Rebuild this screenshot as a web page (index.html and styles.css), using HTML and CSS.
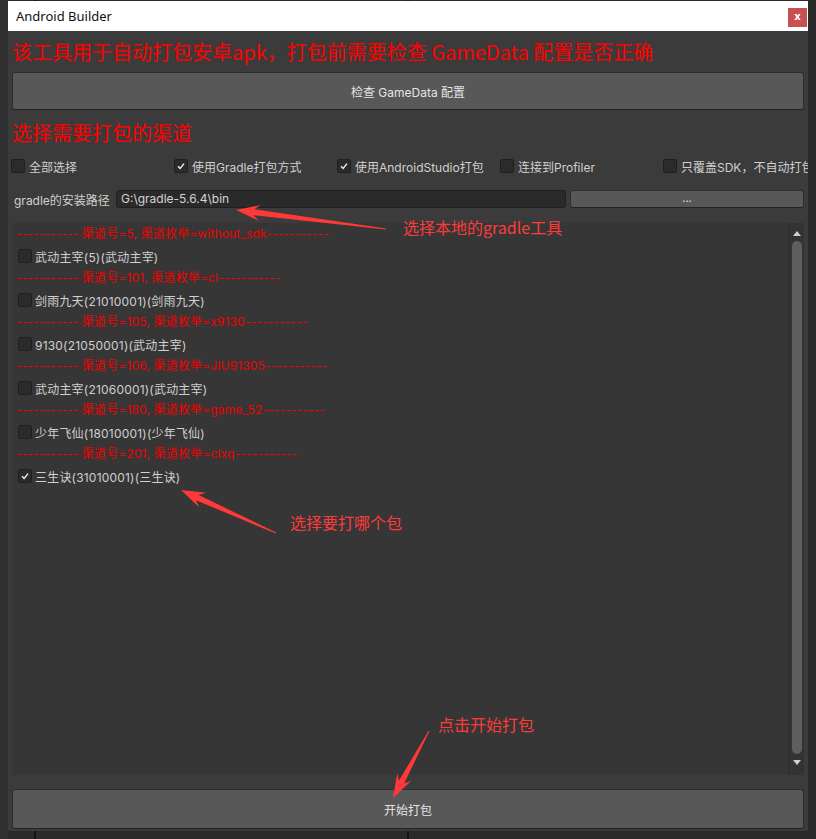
FILE: index.html
```html
<!DOCTYPE html>
<html lang="zh">
<head>
<meta charset="utf-8">
<title>Android Builder</title>
<link rel="stylesheet" href="styles.css">
</head>
<body>
<div class="window">
  <div class="titlebar">
    <span class="title">Android Builder</span>
    <span class="close">x</span>
  </div>
  <div class="content">
    <div class="heading">该工具用于自动打包安卓apk，打包前需要检查 GameData 配置是否正确</div>
    <div class="btn btn-check">检查 GameData 配置</div>
    <div class="heading heading2">选择需要打包的渠道</div>
    <div class="options">
      <label class="opt"><span class="cb"></span>全部选择</label>
      <label class="opt"><span class="cb on"><svg viewBox="0 0 14 14"><polyline points="3.5,7.2 6,9.8 10.5,4.2"/></svg></span>使用Gradle打包方式</label>
      <label class="opt"><span class="cb on"><svg viewBox="0 0 14 14"><polyline points="3.5,7.2 6,9.8 10.5,4.2"/></svg></span>使用AndroidStudio打包</label>
      <label class="opt"><span class="cb"></span>连接到Profiler</label>
      <label class="opt"><span class="cb"></span>只覆盖SDK，不自动打包</label>
    </div>
    <div class="gradle">
      <span class="glabel">gradle的安装路径</span>
      <span class="field">G:\gradle-5.6.4\bin</span>
      <span class="btn btn-small">...</span>
    </div>
    <div class="list">
      <div class="rows">
        <div class="sep">----------- 渠道号=5, 渠道枚举=without_sdk-----------</div>
        <div class="item"><span class="cb"></span>武动主宰(5)(武动主宰)</div>
        <div class="sep">----------- 渠道号=101, 渠道枚举=cl-----------</div>
        <div class="item"><span class="cb"></span>剑雨九天(21010001)(剑雨九天)</div>
        <div class="sep">----------- 渠道号=105, 渠道枚举=x9130-----------</div>
        <div class="item"><span class="cb"></span>9130(21050001)(武动主宰)</div>
        <div class="sep">----------- 渠道号=106, 渠道枚举=JIU91305-----------</div>
        <div class="item"><span class="cb"></span>武动主宰(21060001)(武动主宰)</div>
        <div class="sep">----------- 渠道号=180, 渠道枚举=game_52-----------</div>
        <div class="item"><span class="cb"></span>少年飞仙(18010001)(少年飞仙)</div>
        <div class="sep">----------- 渠道号=201, 渠道枚举=clxq-----------</div>
        <div class="item"><span class="cb on"><svg viewBox="0 0 14 14"><polyline points="3.5,7.2 6,9.8 10.5,4.2"/></svg></span>三生诀(31010001)(三生诀)</div>
      </div>
      <div class="scrollbar">
        <span class="arrow up"></span>
        <span class="thumb"></span>
        <span class="arrow down"></span>
      </div>
    </div>
    <div class="btn btn-build">开始打包</div>
  </div>
</div>

<div class="overlay">
  <svg class="arrows" viewBox="0 0 816 839" width="816" height="839">
    <polygon points="386.1,228.5 254.3,209.3 260.8,205.1 236,210 258.8,220.9 253.5,215.3 385.9,229.5"/>
    <polygon points="276.2,532.5 198.6,494.9 206.2,492.8 181,490 199.4,507.4 196.0,500.3 275.8,533.5"/>
    <polygon points="428.6,730.8 398.9,780.7 397.3,773.1 393,798 411.4,780.7 404.1,783.5 429.4,731.2"/>
  </svg>
  <span class="note note1">选择本地的gradle工具</span>
  <span class="note note2">选择要打哪个包</span>
  <span class="note note3">点击开始打包</span>
</div>
</body>
</html>
```

FILE: styles.css
```css
html {
  background: #2c2c2c;
}

body {
  margin: 0;
  width: 816px;
  height: 839px;
  box-sizing: border-box;
  padding: 1px 8px 0 8px;
  position: relative;
  overflow: hidden;
  font-family: Inter, "Noto Sans CJK SC", sans-serif;
  background:
    linear-gradient(to right, transparent 34px, #141414 34px, #141414 36px, transparent 36px),
    linear-gradient(to right, transparent 407px, #141414 407px, #141414 409px, transparent 409px),
    linear-gradient(to right, #313131 0, #313131 8px, #2a2a2a 8px);
}

.window {
  width: 800px;
  height: 830px;
  background: #3b3b3b;
  overflow: hidden;
  display: flex;
  flex-direction: column;
}

.titlebar {
  height: 30px;
  flex-shrink: 0;
  background: #ffffff;
  display: flex;
  justify-content: space-between;
  align-items: flex-start;
  padding: 0 1px 0 8px;
}

.title {
  font-family: "Noto Sans", "Noto Sans CJK SC", sans-serif;
  font-size: 13px;
  line-height: 30px;
  color: #111;
}

.close {
  margin-top: 7px;
  width: 19px;
  height: 19px;
  background: #c75050;
  color: #fff;
  font-family: "DejaVu Sans", sans-serif;
  font-weight: bold;
  font-size: 10px;
  line-height: 18px;
  text-align: center;
}

.content {
  padding: 0 4px;
  display: flex;
  flex-direction: column;
}

.heading {
  margin-top: 9px;
  height: 24px;
  line-height: 24px;
  font-size: 20px;
  color: #ff0000;
  font-family: "Noto Sans CJK SC", sans-serif;
  white-space: nowrap;
}

.heading2 {
  margin-top: 11px;
}

.btn {
  background: #585858;
  border: 1px solid #2e2e2e;
  border-bottom-color: #232323;
  border-radius: 3px;
  box-sizing: border-box;
  color: #e4e4e4;
  font-size: 12px;
  display: flex;
  align-items: center;
  justify-content: center;
}

.btn-check {
  margin-top: 8px;
  height: 38px;
}

.btn-build {
  margin-top: 14px;
  height: 40px;
}

.btn-small {
  height: 18px;
  font-size: 11px;
  padding-bottom: 2px;
}

.options {
  margin-top: 12px;
  margin-left: -1px;
  height: 18px;
  display: grid;
  grid-template-columns: repeat(5, 163px);
}

.opt {
  display: flex;
  align-items: center;
  gap: 4px;
  font-size: 12px;
  color: #d0d0d0;
  white-space: nowrap;
}

.cb {
  width: 14px;
  height: 14px;
  box-sizing: border-box;
  flex-shrink: 0;
  background: #2b2b2b;
  border: 1px solid #1f1f1f;
  border-radius: 2px;
  display: flex;
}

.cb svg {
  width: 12px;
  height: 12px;
}

.cb polyline {
  fill: none;
  stroke: #eeeeee;
  stroke-width: 1.7;
}

.gradle {
  margin-top: 15px;
  height: 18px;
  display: grid;
  grid-template-columns: 100px 450px 1fr;
  gap: 4px;
  align-items: center;
}

.glabel {
  padding-left: 2px;
  font-size: 12px;
  color: #d0d0d0;
  white-space: nowrap;
}

.field {
  height: 18px;
  box-sizing: border-box;
  background: #2a2a2a;
  border: 1px solid #202020;
  border-radius: 3px;
  padding-left: 4px;
  font-size: 12px;
  line-height: 16px;
  color: #d4d4d4;
}

.list {
  margin-top: 15px;
  height: 552px;
  background: #363636;
  display: flex;
}

.rows {
  flex: 1;
  display: flex;
  flex-direction: column;
}

.sep {
  height: 22px;
  line-height: 22px;
  padding-left: 4px;
  font-size: 12px;
  color: #f00000;
  letter-spacing: 0.15px;
  white-space: nowrap;
}

.item {
  height: 22px;
  padding-left: 6px;
  display: flex;
  align-items: center;
  gap: 3px;
  font-size: 12px;
  color: #d0d0d0;
  letter-spacing: 0.2px;
  white-space: nowrap;
}

.scrollbar {
  width: 15px;
  background: #333333;
  border-left: 1px solid #2e2e2e;
  display: flex;
  flex-direction: column;
  align-items: center;
}

.arrow {
  width: 0;
  height: 0;
  border-left: 4px solid transparent;
  border-right: 4px solid transparent;
}

.arrow.up {
  margin-top: 8px;
  margin-bottom: 5px;
  border-bottom: 5px solid #cfcfcf;
}

.arrow.down {
  margin-top: 6px;
  border-top: 5px solid #cfcfcf;
}

.thumb {
  width: 10px;
  height: 513px;
  border-radius: 5px;
  background: #5e5e5e;
}

.overlay {
  position: absolute;
  left: 0;
  top: 0;
  width: 816px;
  height: 839px;
  pointer-events: none;
}

.arrows {
  position: absolute;
  left: 0;
  top: 0;
}

.arrows polygon {
  fill: #ff3838;
}

.note {
  position: absolute;
  font-family: "Noto Sans CJK SC", sans-serif;
  font-size: 16px;
  line-height: 20px;
  color: #ff3a3a;
  white-space: nowrap;
}

.note1 { left: 403px; top: 217px; }
.note2 { left: 290px; top: 512px; }
.note3 { left: 438px; top: 714px; }
```
